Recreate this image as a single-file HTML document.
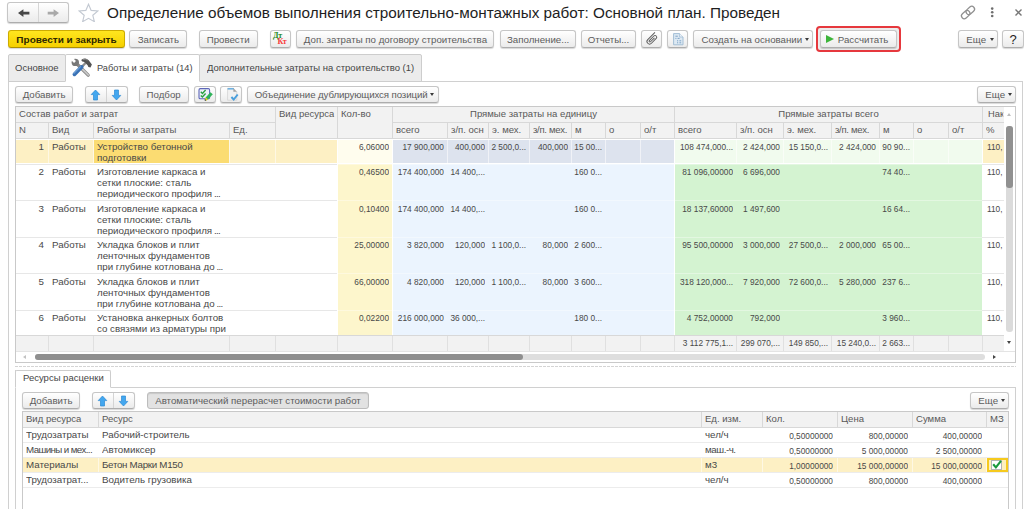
<!DOCTYPE html>
<html><head><meta charset="utf-8">
<style>
*{box-sizing:border-box;margin:0;padding:0}
html,body{width:1024px;height:509px;overflow:hidden;background:#fff}
body{font-family:"Liberation Sans",sans-serif;font-size:9.8px;color:#404040;position:relative}
.a{position:absolute;white-space:nowrap}
.btn{position:absolute;height:18px;top:30px;border:1px solid #c6c6c6;border-bottom-color:#adadad;border-radius:3px;background:linear-gradient(#ffffff,#ebebeb);box-shadow:0 1px 1px rgba(0,0,0,.16);text-align:center;line-height:17px;font-size:10px;color:#5c5c5c;white-space:nowrap;overflow:hidden}
.s{display:inline-block;transform:scale(.97,.9);transform-origin:50% 50%}
.btn.y .s{transform:scale(1,.92)}
.btn.y{background:linear-gradient(#ffe61f,#f6d000);border-color:#cdac00;border-bottom-color:#ad9000;color:#2e2800;font-weight:bold;font-size:10px}
.tab{position:absolute;top:54px;height:28px;border-radius:2px 2px 0 0;border:1px solid #cdcdcd;background:#ececec;line-height:26px;font-size:10px;color:#454545;white-space:nowrap}
.tab span{display:inline-block;transform:scale(.95,.9);transform-origin:0 50%}
.tab.on{background:#fff;border-bottom-color:#fff}
.r{position:absolute}
.caret{display:inline-block;width:0;height:0;border-left:2.9px solid transparent;border-right:2.9px solid transparent;border-top:3.3px solid #3a3a3a;vertical-align:middle;margin-left:3px;margin-top:-1px}
.h{position:absolute;font-size:10px;color:#585858;line-height:16.6px;white-space:nowrap;overflow:hidden;transform:scale(.955,.9);transform-origin:0 0}
.h.ctr{transform-origin:50% 0}
.c{position:absolute;font-size:10px;color:#484848;line-height:11.8px;white-space:nowrap;overflow:hidden;transform:scale(.975,.9);transform-origin:0 0}
.n{text-align:right;transform:scale(.83,.9);transform-origin:100% 0}
.t{transform:scale(.83,.9);transform-origin:0 0}
.nr{text-align:right;transform-origin:100% 0}
</style></head><body>
<div class="a" style="left:7px;top:2px;width:62px;height:21px;border:1px solid #c6c6c6;border-bottom-color:#adadad;border-radius:3px;background:linear-gradient(#fff,#ebebeb);box-shadow:0 1px 1px rgba(0,0,0,.16)"></div>
<div class="a" style="left:38px;top:3px;width:1px;height:19px;background:#d6d6d6"></div>
<svg class="a" style="left:17px;top:7px" width="14" height="12" viewBox="0 0 14 12"><path d="M1 6.1 L6.4 2.2 V4.7 H12.4 V7.5 H6.4 V10 Z" fill="#484848"/></svg>
<svg class="a" style="left:46px;top:7px" width="14" height="12" viewBox="0 0 14 12"><path d="M13 6.1 L7.6 2.2 V4.7 H1.7 V7.5 H7.6 V10 Z" fill="#a9a9a9"/></svg>
<svg class="a" style="left:78px;top:2.8px" width="21" height="19.4" viewBox="0 0 19 18" preserveAspectRatio="none"><path d="M9.5 1.2 L11.9 6.9 L18 7.4 L13.4 11.4 L14.8 17.3 L9.5 14.2 L4.2 17.3 L5.6 11.4 L1 7.4 L7.1 6.9 Z" stroke="#c3c9d2" stroke-width="1.05" fill="#fff"/></svg>
<div class="a" id="title" style="left:107px;top:3px;font-size:15.3px;line-height:20px;color:#1e1e1e">Определение объемов выполнения строительно-монтажных работ: Основной план. Проведен</div>
<svg class="a" style="left:959px;top:4px" width="18" height="17" viewBox="0 0 18 17"><g fill="none" stroke="#8f8f8f" stroke-width="1.25" transform="rotate(-42 9 8.5)"><rect x="1.2" y="5.7" width="9.4" height="5.6" rx="2.8"/><rect x="7.4" y="5.7" width="9.4" height="5.6" rx="2.8"/></g></svg>
<svg class="a" style="left:988px;top:5px" width="8" height="14" viewBox="0 0 8 14"><circle cx="4.2" cy="3.6" r="1.3" fill="#6e6e6e"/><circle cx="4.2" cy="7.3" r="1.3" fill="#6e6e6e"/><circle cx="4.2" cy="11" r="1.3" fill="#6e6e6e"/></svg>
<svg class="a" style="left:1014px;top:8px" width="9" height="9" viewBox="0 0 9 9"><path d="M1.5 1.5 L7.5 7.5 M7.5 1.5 L1.5 7.5" stroke="#777" stroke-width="1.4"/></svg>

<div class="btn y" style="left:8px;width:117px"><span class="s">Провести и закрыть</span></div>
<div class="btn" style="left:129px;width:58px"><span class="s">Записать</span></div>
<div class="btn" style="left:199px;width:59px"><span class="s">Провести</span></div>
<div class="btn" style="left:270px;width:21px"><span style="position:absolute;left:2px;top:1px;font:bold 8px/8px 'Liberation Serif',serif;color:#1f8a24;letter-spacing:-.3px">Дт</span><span style="position:absolute;left:6.5px;top:7.4px;font:bold 8px/8px 'Liberation Serif',serif;color:#f83a3a;letter-spacing:-.3px">Кт</span></div>
<div class="btn" style="left:296px;width:198px"><span class="s">Доп. затраты по договору строительства</span></div>
<div class="btn" style="left:500px;width:76px"><span class="s">Заполнение...</span></div>
<div class="btn" style="left:581px;width:55px"><span class="s">Отчеты...</span></div>
<div class="btn" style="left:641px;width:21px"><svg style="position:absolute;left:3px;top:1px" width="14" height="14" viewBox="0 0 14 14"><g fill="none" stroke="#5c5c5c" stroke-width=".95" transform="rotate(45 7 7)"><path d="M4.4 0.2 V10.4 a2.6 2.6 0 0 0 5.2 0 V3.6 a1.7 1.7 0 0 0 -3.4 0 V10 a.85 .85 0 0 0 1.7 0 V4.4"/></g></svg></div>
<div class="btn" style="left:667px;width:21px"><svg style="position:absolute;left:4px;top:1px" width="13" height="14" viewBox="0 0 13 14"><path d="M1.6 1.6 H7.6 L11 5 V12.8 H1.6 Z" fill="#dde9f3" stroke="#a3bed5" stroke-width="1"/><path d="M7.6 1.6 V5 H11" fill="#eef4f9" stroke="#a3bed5" stroke-width=".8"/><path d="M3.4 4.2 H5.8 M3.4 6.4 H4.4 M5.6 6.4 H7.6 M5 8.8 H6.2 M7.4 8.8 H9.2 M5 10.8 H6.2 M7.4 10.8 H9.2" stroke="#7ea3c6" stroke-width="1"/></svg></div>
<div class="btn" style="left:693px;width:120px;padding-left:5px"><span class="s" style="margin:0 -1.6px">Создать на основании</span><span class="caret"></span></div>
<div class="a" style="left:816px;top:26px;width:85px;height:26px;border:2px solid #e6383d;border-radius:4px;background:#ececec"></div>
<div class="btn" style="left:820px;width:77px;padding-left:10px"><span class="s">Рассчитать</span><span style="position:absolute;left:4.5px;top:4px;width:0;height:0;border-top:4.5px solid transparent;border-bottom:4.5px solid transparent;border-left:8px solid #3db53a"></span></div>
<div class="btn" style="left:958px;width:40px;padding-left:4px"><span class="s">Еще</span><span class="caret"></span></div>
<div class="btn" style="left:1002px;width:22px;font-size:13px;color:#222">?</div>

<div class="r" style="left:8px;top:81px;width:1015px;height:1px;background:#d0d0d0;"></div>
<div class="r" style="left:8px;top:81px;width:1px;height:430px;background:#d0d0d0;"></div>
<div class="r" style="left:1022px;top:81px;width:1px;height:430px;background:#d0d0d0;"></div>
<div class="tab" style="left:8px;width:58px;padding-left:5.5px"><span>Основное</span></div>
<div class="tab" style="left:199px;width:223px;padding-left:6.5px"><span>Дополнительные затраты на строительство (1)</span></div>
<div class="tab on" style="left:65px;width:135px;padding-left:31px"><span style="transform:scale(.922,.9)">Работы и затраты (14)</span></div>
<svg class="a" style="left:69px;top:56px" width="24" height="22" viewBox="0 0 24 22">
<path d="M8 8 L19.2 19.2" stroke="#8a8a8a" stroke-width="3.3" stroke-linecap="round"/>
<path d="M13.6 13.3 L19.3 19" stroke="#c9c9c9" stroke-width="1.7" stroke-linecap="round"/>
<circle cx="6.3" cy="6.4" r="3.7" fill="#787878"/>
<path d="M6.95 5.05 L2.71 0.81 L0.81 2.71 L5.05 6.95 Z" fill="#fff"/>
<path d="M16.6 7 L12.4 11.2" stroke="#8c8c8c" stroke-width="2.4"/>
<path d="M12.7 10.9 L5.4 18.4" stroke="#3a72b5" stroke-width="3.7" stroke-linecap="round"/>
<path d="M11.6 10.6 L4.9 17.4" stroke="#6a9fd8" stroke-width="1.1" stroke-linecap="round"/>
<path d="M12.2 3.9 Q16.4 0.9 19.7 4.3 L22.9 8.4 L21.5 11.6 L19.4 10.9 L18.6 9.2 L15.8 6.6 Q14.6 5.6 13.2 5.6 Z" fill="#545454"/>
<path d="M14 3.6 Q16.4 2.4 18.4 4.2" stroke="#8e8e8e" stroke-width=".9" fill="none"/>
</svg>

<div class="btn" style="left:15px;top:86px;width:58px;height:17px;line-height:15px;"><span class="s">Добавить</span></div>
<div class="btn" style="left:85px;top:86px;width:43px;height:17px;line-height:15px;"><svg style="position:absolute;left:4.2px;top:2px" width="11" height="12" viewBox="0 0 11 12"><path d="M5.5 1 L9.8 5.6 H7.5 V11 H3.5 V5.6 H1.2 Z" fill="#43a7ef" stroke="#2b8ad4" stroke-width=".7"/></svg><svg style="position:absolute;left:25px;top:2px" width="11" height="12" viewBox="0 0 11 12"><path d="M5.5 11 L9.8 6.4 H7.5 V1 H3.5 V6.4 H1.2 Z" fill="#43a7ef" stroke="#2b8ad4" stroke-width=".7"/></svg><span style="position:absolute;left:20px;top:0;width:1px;height:15px;background:#d4d4d4"></span></div>
<div class="btn" style="left:139px;top:86px;width:50px;height:17px;line-height:15px;"><span class="s">Подбор</span></div>
<div class="btn" style="left:194px;top:86px;width:22px;height:17px;line-height:15px;"><svg style="position:absolute;left:1px;top:0px" width="19" height="15" viewBox="0 0 19 15"><rect x="3" y="1.6" width="10.6" height="10.2" rx="1.3" fill="#eef0fa" stroke="#5d66b8" stroke-width="1.1"/><path d="M4.8 4.8 l1.6 1.6 l3.2 -3.4 M4.8 8.4 l1.6 1.6 l3.2 -3.4" stroke="#2aa040" stroke-width="1.4" fill="none"/><path d="M15.6 6.2 L10.6 11.8" stroke="#2fb35a" stroke-width="3.2"/><path d="M10.9 11.4 L9.6 12.9" stroke="#d8d41c" stroke-width="2.4"/><path d="M9.6 12.6 L8.9 13.5" stroke="#333" stroke-width="1.5"/></svg></div>
<div class="btn" style="left:220px;top:86px;width:22px;height:17px;line-height:15px;"><svg style="position:absolute;left:1px;top:0px" width="19" height="15" viewBox="0 0 19 15"><path d="M5.6 1.3 H11.4 L14.8 4.7 V13.2 H5.6 Z" fill="#f1f1f1" stroke="#d2d2d2" stroke-width=".8"/><rect x="5.6" y="1" width="6.4" height="1.6" fill="#6fb1e0"/><path d="M11.4 1.3 L14.8 4.7 H11.4 Z" fill="#a2a2a2"/><path d="M9.4 10 l2.3 2.5 l4 -5" stroke="#4a9fdc" stroke-width="2" fill="none"/></svg></div>
<div class="btn" style="left:247px;top:86px;width:192px;height:17px;line-height:15px;letter-spacing:-.12px;padding-left:4px"><span class="s" style="margin:0 -3.8px">Объединение дублирующихся позиций</span><span class="caret"></span></div>
<div class="btn" style="left:977px;top:86px;width:39px;height:17px;line-height:15px;padding-left:4px"><span class="s" style="margin:0 -0.3px">Еще</span><span class="caret"></span></div>
<div class="r" style="left:15px;top:106px;width:1001px;height:257px;background:#fff;border:1px solid #c9c9c9"></div>
<div class="r" style="left:16px;top:107px;width:999px;height:31px;background:#f2f2f2;"></div>
<div class="r" style="left:338px;top:139px;width:54px;height:196px;background:#fdf6cc;"></div>
<div class="r" style="left:393px;top:139px;width:281px;height:196px;background:#ebf4fe;"></div>
<div class="r" style="left:675px;top:139px;width:307px;height:196px;background:#d4f3d1;"></div>
<div class="r" style="left:16px;top:140px;width:321px;height:23px;background:#fdf0c4;"></div>
<div class="r" style="left:94px;top:140px;width:135px;height:23px;background:#fbdc72;"></div>
<div class="r" style="left:338px;top:139px;width:54px;height:25px;background:#fff;"></div>
<div class="r" style="left:338px;top:140px;width:54px;height:23px;background:#fffdee;"></div>
<div class="r" style="left:393px;top:139px;width:281px;height:25px;background:#fff;"></div>
<div class="r" style="left:393px;top:140px;width:281px;height:23px;background:#dde3ee;"></div>
<div class="r" style="left:675px;top:139px;width:307px;height:25px;background:#fff;"></div>
<div class="r" style="left:675px;top:140px;width:307px;height:23px;background:#f1fbee;"></div>
<div class="r" style="left:983px;top:140px;width:21px;height:23px;background:#fdf0c4;"></div>
<div class="r" style="left:16px;top:164px;width:321px;height:1px;background:#e7e7e7;"></div>
<div class="r" style="left:982px;top:164px;width:22px;height:1px;background:#e7e7e7;"></div>
<div class="r" style="left:337px;top:164px;width:645px;height:1px;background:rgba(255,255,255,.35);"></div>
<div class="r" style="left:16px;top:200px;width:321px;height:1px;background:#e7e7e7;"></div>
<div class="r" style="left:982px;top:200px;width:22px;height:1px;background:#e7e7e7;"></div>
<div class="r" style="left:337px;top:200px;width:645px;height:1px;background:rgba(255,255,255,.35);"></div>
<div class="r" style="left:16px;top:237px;width:321px;height:1px;background:#e7e7e7;"></div>
<div class="r" style="left:982px;top:237px;width:22px;height:1px;background:#e7e7e7;"></div>
<div class="r" style="left:337px;top:237px;width:645px;height:1px;background:rgba(255,255,255,.35);"></div>
<div class="r" style="left:16px;top:273px;width:321px;height:1px;background:#e7e7e7;"></div>
<div class="r" style="left:982px;top:273px;width:22px;height:1px;background:#e7e7e7;"></div>
<div class="r" style="left:337px;top:273px;width:645px;height:1px;background:rgba(255,255,255,.35);"></div>
<div class="r" style="left:16px;top:310px;width:321px;height:1px;background:#e7e7e7;"></div>
<div class="r" style="left:982px;top:310px;width:22px;height:1px;background:#e7e7e7;"></div>
<div class="r" style="left:337px;top:310px;width:645px;height:1px;background:rgba(255,255,255,.35);"></div>
<div class="r" style="left:16px;top:138px;width:988px;height:1px;background:#d8d8d8;"></div>
<div class="r" style="left:48px;top:140px;width:1px;height:23px;background:rgba(255,255,255,.55);"></div>
<div class="r" style="left:93px;top:140px;width:1px;height:23px;background:rgba(255,255,255,.55);"></div>
<div class="r" style="left:229px;top:140px;width:1px;height:23px;background:rgba(255,255,255,.55);"></div>
<div class="r" style="left:275px;top:140px;width:1px;height:23px;background:rgba(255,255,255,.55);"></div>
<div class="r" style="left:337px;top:140px;width:1px;height:23px;background:rgba(255,255,255,.55);"></div>
<div class="r" style="left:392px;top:140px;width:1px;height:23px;background:rgba(255,255,255,.55);"></div>
<div class="r" style="left:447px;top:140px;width:1px;height:23px;background:rgba(255,255,255,.55);"></div>
<div class="r" style="left:488px;top:140px;width:1px;height:23px;background:rgba(255,255,255,.55);"></div>
<div class="r" style="left:529px;top:140px;width:1px;height:23px;background:rgba(255,255,255,.55);"></div>
<div class="r" style="left:571px;top:140px;width:1px;height:23px;background:rgba(255,255,255,.55);"></div>
<div class="r" style="left:605px;top:140px;width:1px;height:23px;background:rgba(255,255,255,.55);"></div>
<div class="r" style="left:640px;top:140px;width:1px;height:23px;background:rgba(255,255,255,.55);"></div>
<div class="r" style="left:674px;top:140px;width:1px;height:23px;background:rgba(255,255,255,.55);"></div>
<div class="r" style="left:736px;top:140px;width:1px;height:23px;background:rgba(255,255,255,.55);"></div>
<div class="r" style="left:783px;top:140px;width:1px;height:23px;background:rgba(255,255,255,.55);"></div>
<div class="r" style="left:831px;top:140px;width:1px;height:23px;background:rgba(255,255,255,.55);"></div>
<div class="r" style="left:879px;top:140px;width:1px;height:23px;background:rgba(255,255,255,.55);"></div>
<div class="r" style="left:913px;top:140px;width:1px;height:23px;background:rgba(255,255,255,.55);"></div>
<div class="r" style="left:948px;top:140px;width:1px;height:23px;background:rgba(255,255,255,.55);"></div>
<div class="r" style="left:982px;top:140px;width:1px;height:23px;background:rgba(255,255,255,.55);"></div>
<div class="r" style="left:16px;top:335px;width:988px;height:16px;background:#f2f2f2;"></div>
<div class="r" style="left:16px;top:335px;width:988px;height:1px;background:#d8d8d8;"></div>
<div class="r" style="left:16px;top:351px;width:999px;height:1px;background:#e4e4e4;"></div>
<div class="r" style="left:48px;top:336px;width:1px;height:15px;background:#e0e0e0;"></div>
<div class="r" style="left:93px;top:336px;width:1px;height:15px;background:#e0e0e0;"></div>
<div class="r" style="left:229px;top:336px;width:1px;height:15px;background:#e0e0e0;"></div>
<div class="r" style="left:275px;top:336px;width:1px;height:15px;background:#e0e0e0;"></div>
<div class="r" style="left:337px;top:336px;width:1px;height:15px;background:#e0e0e0;"></div>
<div class="r" style="left:392px;top:336px;width:1px;height:15px;background:#e0e0e0;"></div>
<div class="r" style="left:447px;top:336px;width:1px;height:15px;background:#e0e0e0;"></div>
<div class="r" style="left:488px;top:336px;width:1px;height:15px;background:#e0e0e0;"></div>
<div class="r" style="left:529px;top:336px;width:1px;height:15px;background:#e0e0e0;"></div>
<div class="r" style="left:571px;top:336px;width:1px;height:15px;background:#e0e0e0;"></div>
<div class="r" style="left:605px;top:336px;width:1px;height:15px;background:#e0e0e0;"></div>
<div class="r" style="left:640px;top:336px;width:1px;height:15px;background:#e0e0e0;"></div>
<div class="r" style="left:674px;top:336px;width:1px;height:15px;background:#e0e0e0;"></div>
<div class="r" style="left:736px;top:336px;width:1px;height:15px;background:#e0e0e0;"></div>
<div class="r" style="left:783px;top:336px;width:1px;height:15px;background:#e0e0e0;"></div>
<div class="r" style="left:831px;top:336px;width:1px;height:15px;background:#e0e0e0;"></div>
<div class="r" style="left:879px;top:336px;width:1px;height:15px;background:#e0e0e0;"></div>
<div class="r" style="left:913px;top:336px;width:1px;height:15px;background:#e0e0e0;"></div>
<div class="r" style="left:948px;top:336px;width:1px;height:15px;background:#e0e0e0;"></div>
<div class="r" style="left:982px;top:336px;width:1px;height:15px;background:#e0e0e0;"></div>
<div class="r" style="left:275px;top:107px;width:1px;height:31px;background:#d8d8d8;"></div>
<div class="r" style="left:337px;top:107px;width:1px;height:31px;background:#d8d8d8;"></div>
<div class="r" style="left:392px;top:107px;width:1px;height:31px;background:#d8d8d8;"></div>
<div class="r" style="left:674px;top:107px;width:1px;height:31px;background:#d8d8d8;"></div>
<div class="r" style="left:982px;top:107px;width:1px;height:31px;background:#d8d8d8;"></div>
<div class="r" style="left:48px;top:123px;width:1px;height:15px;background:#d8d8d8;"></div>
<div class="r" style="left:93px;top:123px;width:1px;height:15px;background:#d8d8d8;"></div>
<div class="r" style="left:229px;top:123px;width:1px;height:15px;background:#d8d8d8;"></div>
<div class="r" style="left:447px;top:123px;width:1px;height:15px;background:#d8d8d8;"></div>
<div class="r" style="left:488px;top:123px;width:1px;height:15px;background:#d8d8d8;"></div>
<div class="r" style="left:529px;top:123px;width:1px;height:15px;background:#d8d8d8;"></div>
<div class="r" style="left:571px;top:123px;width:1px;height:15px;background:#d8d8d8;"></div>
<div class="r" style="left:605px;top:123px;width:1px;height:15px;background:#d8d8d8;"></div>
<div class="r" style="left:640px;top:123px;width:1px;height:15px;background:#d8d8d8;"></div>
<div class="r" style="left:736px;top:123px;width:1px;height:15px;background:#d8d8d8;"></div>
<div class="r" style="left:783px;top:123px;width:1px;height:15px;background:#d8d8d8;"></div>
<div class="r" style="left:831px;top:123px;width:1px;height:15px;background:#d8d8d8;"></div>
<div class="r" style="left:879px;top:123px;width:1px;height:15px;background:#d8d8d8;"></div>
<div class="r" style="left:913px;top:123px;width:1px;height:15px;background:#d8d8d8;"></div>
<div class="r" style="left:948px;top:123px;width:1px;height:15px;background:#d8d8d8;"></div>
<div class="r" style="left:16px;top:122px;width:259px;height:1px;background:#d8d8d8;"></div>
<div class="r" style="left:392px;top:122px;width:612px;height:1px;background:#d8d8d8;"></div>
<div class="h" style="left:19px;top:107px;width:250px;">Состав работ и затрат</div>
<div class="h" style="left:279px;top:107px;width:58px;">Вид ресурса</div>
<div class="h" style="left:341px;top:107px;width:50px;">Кол-во</div>
<div class="h ctr" style="left:393px;top:107px;width:281px;text-align:center">Прямые затраты на единицу</div>
<div class="h ctr" style="left:675px;top:107px;width:307px;text-align:center">Прямые затраты всего</div>
<div class="h" style="left:988px;top:107px;width:16px;font-size:9.8px">Нак</div>
<div class="h" style="left:19px;top:123px;width:29px;">N</div>
<div class="h" style="left:52px;top:123px;width:41px;">Вид</div>
<div class="h" style="left:97px;top:123px;width:132px;">Работы и затраты</div>
<div class="h" style="left:233px;top:123px;width:42px;">Ед.</div>
<div class="h" style="left:396px;top:123px;width:51px;">всего</div>
<div class="h" style="left:451px;top:123px;width:37px;">з/п. осн</div>
<div class="h" style="left:492px;top:123px;width:37px;">э. мех.</div>
<div class="h" style="left:533px;top:123px;width:38px;letter-spacing:-.3px">з/п. мех.</div>
<div class="h" style="left:575px;top:123px;width:30px;">м</div>
<div class="h" style="left:609px;top:123px;width:31px;">о</div>
<div class="h" style="left:644px;top:123px;width:30px;">о/т</div>
<div class="h" style="left:678px;top:123px;width:58px;">всего</div>
<div class="h" style="left:740px;top:123px;width:43px;">з/п. осн</div>
<div class="h" style="left:787px;top:123px;width:44px;">э. мех.</div>
<div class="h" style="left:835px;top:123px;width:44px;letter-spacing:-.3px">з/п. мех.</div>
<div class="h" style="left:883px;top:123px;width:30px;">м</div>
<div class="h" style="left:917px;top:123px;width:31px;">о</div>
<div class="h" style="left:952px;top:123px;width:30px;">о/т</div>
<div class="h" style="left:986px;top:123px;width:18px;">%</div>
<div class="c nr" style="left:24px;top:142px;width:20px;">1</div>
<div class="c" style="left:52px;top:142px;width:41px;">Работы</div>
<div class="c" style="left:97.4px;top:142px;width:135px">Устройство бетонной<br>подготовки</div>
<div class="c n" style="left:308.5px;top:142px;width:80px;">6,06000</div>
<div class="c n" style="left:363.5px;top:142px;width:80px;">17 900,000</div>
<div class="c n" style="left:404.5px;top:142px;width:80px;">400,000</div>
<div class="c n" style="left:445.5px;top:142px;width:80px;">2 500,0...</div>
<div class="c n" style="left:487.5px;top:142px;width:80px;">400,000</div>
<div class="c n" style="left:521.5px;top:142px;width:80px;">15 00...</div>
<div class="c n" style="left:652.5px;top:142px;width:80px;">108 474,000...</div>
<div class="c n" style="left:699.5px;top:142px;width:80px;">2 424,000</div>
<div class="c n" style="left:747.5px;top:142px;width:80px;">15 150,0...</div>
<div class="c n" style="left:795.5px;top:142px;width:80px;">2 424,000</div>
<div class="c n" style="left:829.5px;top:142px;width:80px;">90 90...</div>
<div class="c t" style="left:987px;top:142px;width:19px;">110,</div>
<div class="c nr" style="left:24px;top:167px;width:20px;">2</div>
<div class="c" style="left:52px;top:167px;width:41px;">Работы</div>
<div class="c" style="left:97.4px;top:167px;width:135px">Изготовление каркаса и<br>сетки плоские: сталь<br>периодического профиля<span style="letter-spacing:-.8px"> ...</span></div>
<div class="c n" style="left:308.5px;top:167px;width:80px;">0,46500</div>
<div class="c n" style="left:363.5px;top:167px;width:80px;">174 400,000</div>
<div class="c n" style="left:404.5px;top:167px;width:80px;">14 400,...</div>
<div class="c n" style="left:521.5px;top:167px;width:80px;">160 0...</div>
<div class="c n" style="left:652.5px;top:167px;width:80px;">81 096,00000</div>
<div class="c n" style="left:699.5px;top:167px;width:80px;">6 696,000</div>
<div class="c n" style="left:829.5px;top:167px;width:80px;">74 40...</div>
<div class="c t" style="left:987px;top:167px;width:19px;">110,</div>
<div class="c nr" style="left:24px;top:203.6px;width:20px;">3</div>
<div class="c" style="left:52px;top:203.6px;width:41px;">Работы</div>
<div class="c" style="left:97.4px;top:203.6px;width:135px">Изготовление каркаса и<br>сетки плоские: сталь<br>периодического профиля<span style="letter-spacing:-.8px"> ...</span></div>
<div class="c n" style="left:308.5px;top:203.6px;width:80px;">0,10400</div>
<div class="c n" style="left:363.5px;top:203.6px;width:80px;">174 400,000</div>
<div class="c n" style="left:404.5px;top:203.6px;width:80px;">14 400,...</div>
<div class="c n" style="left:521.5px;top:203.6px;width:80px;">160 0...</div>
<div class="c n" style="left:652.5px;top:203.6px;width:80px;">18 137,60000</div>
<div class="c n" style="left:699.5px;top:203.6px;width:80px;">1 497,600</div>
<div class="c n" style="left:829.5px;top:203.6px;width:80px;">16 64...</div>
<div class="c t" style="left:987px;top:203.6px;width:19px;">110,</div>
<div class="c nr" style="left:24px;top:240px;width:20px;">4</div>
<div class="c" style="left:52px;top:240px;width:41px;">Работы</div>
<div class="c" style="left:97.4px;top:240px;width:135px">Укладка блоков и плит<br>ленточных фундаментов<br>при глубине котлована до<span style="letter-spacing:-.8px"> ...</span></div>
<div class="c n" style="left:308.5px;top:240px;width:80px;">25,00000</div>
<div class="c n" style="left:363.5px;top:240px;width:80px;">3 820,000</div>
<div class="c n" style="left:404.5px;top:240px;width:80px;">120,000</div>
<div class="c n" style="left:445.5px;top:240px;width:80px;">1 100,0...</div>
<div class="c n" style="left:487.5px;top:240px;width:80px;">80,000</div>
<div class="c n" style="left:521.5px;top:240px;width:80px;">2 600...</div>
<div class="c n" style="left:652.5px;top:240px;width:80px;">95 500,00000</div>
<div class="c n" style="left:699.5px;top:240px;width:80px;">3 000,000</div>
<div class="c n" style="left:747.5px;top:240px;width:80px;">27 500,0...</div>
<div class="c n" style="left:795.5px;top:240px;width:80px;">2 000,000</div>
<div class="c n" style="left:829.5px;top:240px;width:80px;">65 00...</div>
<div class="c t" style="left:987px;top:240px;width:19px;">110,</div>
<div class="c nr" style="left:24px;top:276.6px;width:20px;">5</div>
<div class="c" style="left:52px;top:276.6px;width:41px;">Работы</div>
<div class="c" style="left:97.4px;top:276.6px;width:135px">Укладка блоков и плит<br>ленточных фундаментов<br>при глубине котлована до<span style="letter-spacing:-.8px"> ...</span></div>
<div class="c n" style="left:308.5px;top:276.6px;width:80px;">66,00000</div>
<div class="c n" style="left:363.5px;top:276.6px;width:80px;">4 820,000</div>
<div class="c n" style="left:404.5px;top:276.6px;width:80px;">120,000</div>
<div class="c n" style="left:445.5px;top:276.6px;width:80px;">1 100,0...</div>
<div class="c n" style="left:487.5px;top:276.6px;width:80px;">80,000</div>
<div class="c n" style="left:521.5px;top:276.6px;width:80px;">3 600...</div>
<div class="c n" style="left:652.5px;top:276.6px;width:80px;">318 120,000...</div>
<div class="c n" style="left:699.5px;top:276.6px;width:80px;">7 920,000</div>
<div class="c n" style="left:747.5px;top:276.6px;width:80px;">72 600,0...</div>
<div class="c n" style="left:795.5px;top:276.6px;width:80px;">5 280,000</div>
<div class="c n" style="left:829.5px;top:276.6px;width:80px;">237 6...</div>
<div class="c t" style="left:987px;top:276.6px;width:19px;">110,</div>
<div class="c nr" style="left:24px;top:313px;width:20px;">6</div>
<div class="c" style="left:52px;top:313px;width:41px;">Работы</div>
<div class="c" style="left:97.4px;top:313px;width:135px">Установка анкерных болтов<br>со связями из арматуры при</div>
<div class="c n" style="left:308.5px;top:313px;width:80px;">0,02200</div>
<div class="c n" style="left:363.5px;top:313px;width:80px;">216 000,000</div>
<div class="c n" style="left:404.5px;top:313px;width:80px;">36 000,...</div>
<div class="c n" style="left:521.5px;top:313px;width:80px;">180 0...</div>
<div class="c n" style="left:652.5px;top:313px;width:80px;">4 752,00000</div>
<div class="c n" style="left:699.5px;top:313px;width:80px;">792,000</div>
<div class="c n" style="left:829.5px;top:313px;width:80px;">3 960...</div>
<div class="c t" style="left:987px;top:313px;width:19px;">110,</div>
<div class="c n" style="left:652.5px;top:338px;width:80px;">3 112 775,1...</div>
<div class="c n" style="left:699.5px;top:338px;width:80px;">299 070,...</div>
<div class="c n" style="left:747.5px;top:338px;width:80px;">149 850,...</div>
<div class="c n" style="left:795.5px;top:338px;width:80px;">15 240,0...</div>
<div class="c n" style="left:829.5px;top:338px;width:80px;">2 663...</div>
<div class="r" style="left:1004px;top:107px;width:11px;height:244px;background:#fff;"></div>
<div class="r" style="left:1006px;top:126px;width:6.5px;height:206px;background:#dbdbdb;border-radius:3px"></div>
<div class="r" style="left:1006px;top:126px;width:6.5px;height:62px;background:#909090;border-radius:3px"></div>
<div class="r" style="left:1007px;top:113px;width:0;height:0;border-left:2.5px solid transparent;border-right:2.5px solid transparent;border-bottom:3.5px solid #bdbdbd"></div>
<div class="r" style="left:1007px;top:341px;width:0;height:0;border-left:2.5px solid transparent;border-right:2.5px solid transparent;border-top:3.5px solid #444"></div>
<div class="r" style="left:35px;top:354px;width:950px;height:6px;background:#dedede;border-radius:3px"></div>
<div class="r" style="left:35px;top:354px;width:488px;height:6px;background:#8f8f8f;border-radius:3px"></div>
<div class="r" style="left:23px;top:354.5px;width:0;height:0;border-top:2.5px solid transparent;border-bottom:2.5px solid transparent;border-right:3.5px solid #c2c2c2"></div>
<div class="r" style="left:993px;top:355px;width:0;height:0;border-top:2.5px solid transparent;border-bottom:2.5px solid transparent;border-left:3.5px solid #444"></div>
<div class="r" style="left:15px;top:366px;width:1001px;height:1px;background:repeating-linear-gradient(90deg,#d4d4d4 0 2.5px,transparent 2.5px 4px)"></div>
<div class="r" style="left:15px;top:387px;width:1001px;height:1px;background:#d0d0d0;"></div>
<div class="r" style="left:15px;top:370px;width:1px;height:140px;background:#d0d0d0;"></div>
<div class="r" style="left:1015px;top:387px;width:1px;height:123px;background:#d0d0d0;"></div>
<div class="tab on" style="left:15px;top:370px;width:96px;height:18px;line-height:13px;padding-left:6.5px"><span>Ресурсы расценки</span></div>
<div class="btn" style="left:22px;top:392px;width:58px;height:17px;line-height:15px;"><span class="s">Добавить</span></div>
<div class="btn" style="left:92px;top:392px;width:43px;height:17px;line-height:15px;"><svg style="position:absolute;left:4.2px;top:2px" width="11" height="12" viewBox="0 0 11 12"><path d="M5.5 1 L9.8 5.6 H7.5 V11 H3.5 V5.6 H1.2 Z" fill="#43a7ef" stroke="#2b8ad4" stroke-width=".7"/></svg><svg style="position:absolute;left:25px;top:2px" width="11" height="12" viewBox="0 0 11 12"><path d="M5.5 11 L9.8 6.4 H7.5 V1 H3.5 V6.4 H1.2 Z" fill="#43a7ef" stroke="#2b8ad4" stroke-width=".7"/></svg><span style="position:absolute;left:20px;top:0;width:1px;height:15px;background:#d4d4d4"></span></div>
<div class="btn" style="left:147px;top:392px;width:222px;height:17px;line-height:15px;background:#e2e2e2;border-color:#bdbdbd;box-shadow:inset 0 1px 1px rgba(0,0,0,.12)"><span class="s">Автоматический перерасчет стоимости работ</span></div>
<div class="btn" style="left:970px;top:392px;width:39px;height:17px;line-height:15px;padding-left:4px"><span class="s" style="margin:0 -0.3px">Еще</span><span class="caret"></span></div>
<div class="r" style="left:22px;top:411px;width:987px;height:100px;background:#fff;border:1px solid #c9c9c9"></div>
<div class="r" style="left:23px;top:412px;width:985px;height:15px;background:#f2f2f2;"></div>
<div class="r" style="left:23px;top:427px;width:985px;height:1px;background:#d8d8d8;"></div>
<div class="r" style="left:98px;top:412px;width:1px;height:15px;background:#d8d8d8;"></div>
<div class="r" style="left:701px;top:412px;width:1px;height:15px;background:#d8d8d8;"></div>
<div class="r" style="left:762px;top:412px;width:1px;height:15px;background:#d8d8d8;"></div>
<div class="r" style="left:837px;top:412px;width:1px;height:15px;background:#d8d8d8;"></div>
<div class="r" style="left:912px;top:412px;width:1px;height:15px;background:#d8d8d8;"></div>
<div class="r" style="left:986px;top:412px;width:1px;height:15px;background:#d8d8d8;"></div>
<div class="h" style="left:26px;top:412px;width:72px;">Вид ресурса</div>
<div class="h" style="left:102px;top:412px;width:599px;">Ресурс</div>
<div class="h" style="left:705px;top:412px;width:57px;">Ед. изм.</div>
<div class="h" style="left:766px;top:412px;width:71px;">Кол.</div>
<div class="h" style="left:841px;top:412px;width:71px;">Цена</div>
<div class="h" style="left:916px;top:412px;width:70px;">Сумма</div>
<div class="h" style="left:990px;top:412px;width:18px;">МЗ</div>
<div class="r" style="left:23px;top:458px;width:985px;height:14px;background:#fdf0c4;"></div>
<div class="r" style="left:98px;top:458px;width:1px;height:14px;background:rgba(255,255,255,.55);"></div>
<div class="r" style="left:701px;top:458px;width:1px;height:14px;background:rgba(255,255,255,.55);"></div>
<div class="r" style="left:762px;top:458px;width:1px;height:14px;background:rgba(255,255,255,.55);"></div>
<div class="r" style="left:837px;top:458px;width:1px;height:14px;background:rgba(255,255,255,.55);"></div>
<div class="r" style="left:912px;top:458px;width:1px;height:14px;background:rgba(255,255,255,.55);"></div>
<div class="r" style="left:986px;top:458px;width:1px;height:14px;background:rgba(255,255,255,.55);"></div>
<div class="r" style="left:23px;top:442px;width:985px;height:1px;background:rgba(120,120,120,.14);"></div>
<div class="c" style="left:26px;top:430px;width:72px;">Трудозатраты</div>
<div class="c" style="left:102px;top:430px;width:613px;">Рабочий-строитель</div>
<div class="c" style="left:705px;top:430px;width:57px;">чел/ч</div>
<div class="c n" style="left:742.6px;top:431px;width:90px;">0,50000000</div>
<div class="c n" style="left:817.6px;top:431px;width:90px;">800,00000</div>
<div class="c n" style="left:891.6px;top:431px;width:90px;">400,00000</div>
<div class="r" style="left:23px;top:457px;width:985px;height:1px;background:rgba(120,120,120,.14);"></div>
<div class="c" style="left:26px;top:445px;width:72px;letter-spacing:-.62px">Машины и мех...</div>
<div class="c" style="left:102px;top:445px;width:613px;">Автомиксер</div>
<div class="c" style="left:705px;top:445px;width:57px;letter-spacing:-.45px">маш.-ч.</div>
<div class="c n" style="left:742.6px;top:446px;width:90px;">0,50000000</div>
<div class="c n" style="left:817.6px;top:446px;width:90px;">5 000,00000</div>
<div class="c n" style="left:891.6px;top:446px;width:90px;">2 500,00000</div>
<div class="r" style="left:23px;top:472px;width:985px;height:1px;background:rgba(120,120,120,.14);"></div>
<div class="c" style="left:26px;top:460px;width:72px;">Материалы</div>
<div class="c" style="left:102px;top:460px;width:613px;letter-spacing:-.3px">Бетон Марки М150</div>
<div class="c" style="left:705px;top:460px;width:57px;">м3</div>
<div class="c n" style="left:742.6px;top:461px;width:90px;">1,00000000</div>
<div class="c n" style="left:817.6px;top:461px;width:90px;">15 000,00000</div>
<div class="c n" style="left:891.6px;top:461px;width:90px;">15 000,00000</div>
<div class="r" style="left:23px;top:487px;width:985px;height:1px;background:rgba(120,120,120,.14);"></div>
<div class="c" style="left:26px;top:475px;width:72px;">Трудозатрат...</div>
<div class="c" style="left:102px;top:475px;width:613px;">Водитель грузовика</div>
<div class="c" style="left:705px;top:475px;width:57px;">чел/ч</div>
<div class="c n" style="left:742.6px;top:476px;width:90px;">0,50000000</div>
<div class="c n" style="left:817.6px;top:476px;width:90px;">800,00000</div>
<div class="c n" style="left:891.6px;top:476px;width:90px;">400,00000</div>
<div class="r" style="left:987px;top:458px;width:21px;height:14px;border:2px solid #f6ca1e;background:#fdf0bd"></div>
<div class="r" style="left:991px;top:460px;width:11px;height:10px;border:1px solid #b4b4b4;background:#fff"></div>
<svg class="a" style="left:991px;top:459px" width="12" height="11" viewBox="0 0 12 11"><path d="M2.2 5.2 L4.9 8.4 L10 1.8" stroke="#1a9a3c" stroke-width="2.1" fill="none"/></svg>
</body></html>
